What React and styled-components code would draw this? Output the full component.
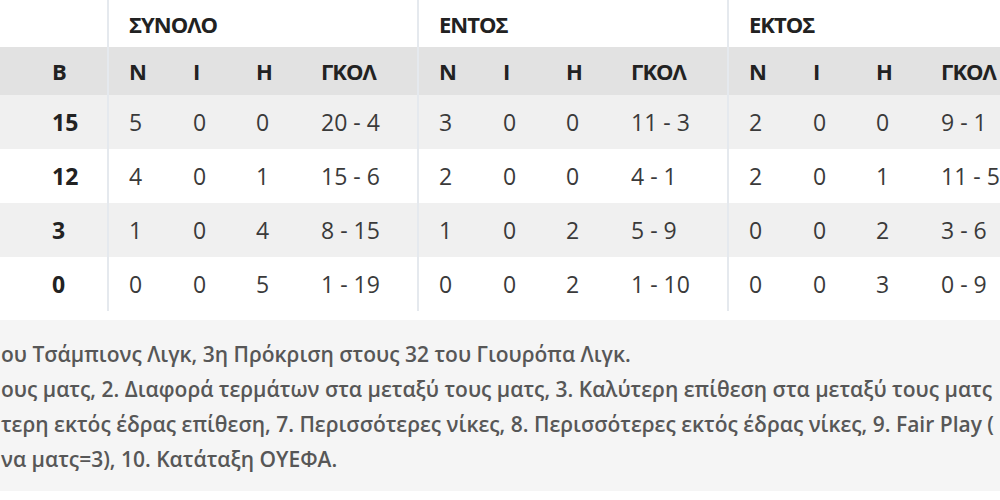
import React from 'react';
import styled, { createGlobalStyle } from 'styled-components';

const GlobalStyle = createGlobalStyle`
  html, body {
    margin: 0;
    padding: 0;
    background: #ffffff;
    overflow: hidden;
  }
  body {
    font-family: "Open Sans", "Noto Sans", sans-serif;
    color: #333333;
  }
`;

const Page = styled.div`
  width: 1000px;
  height: 500px;
  overflow: hidden;
`;

const Table = styled.table`
  border-collapse: collapse;
  table-layout: fixed;
  width: 1038px;
`;

const Cell = styled.td`
  padding: 0 0 0 ${props => (props.$first ? '52px' : '20px')};
  text-align: left;
  vertical-align: middle;
  white-space: nowrap;
  font-size: 23px;
  font-weight: ${props => (props.$bold ? 700 : 400)};
  color: ${props => (props.$bold ? '#222222' : '#3a3a3a')};
  border-left: ${props => (props.$divider ? '2px solid #e5e9ee' : 'none')};
`;

const HeadCell = styled(Cell).attrs({ as: 'th' })`
  font-size: 22px;
  font-weight: 700;
  letter-spacing: -1px;
  color: #222222;
`;

const GroupRow = styled.tr`
  height: 47px;
  background: #ffffff;
`;

const LabelRow = styled.tr`
  height: 48px;
  background: #e2e2e2;
`;

const DataRow = styled.tr`
  height: 54px;
  background: ${props => (props.$shaded ? '#f0f0f0' : '#ffffff')};
`;

const Notes = styled.div`
  margin-top: 9px;
  background: #f5f5f5;
  padding: 17px 0 14px 1px;
  width: 1100px;
`;

const NoteLine = styled.div`
  font-size: 21px;
  font-weight: 600;
  line-height: 35px;
  color: #575757;
  white-space: nowrap;
`;

const groups = ['ΣΥΝΟΛΟ', 'ΕΝΤΟΣ', 'ΕΚΤΟΣ'];
const labels = ['Ν', 'Ι', 'Η', 'ΓΚΟΛ'];
const colWidths = [65, 63, 65, 117];

const rows = [
  { pts: 15, stats: [[5, 0, 0, '20 - 4'], [3, 0, 0, '11 - 3'], [2, 0, 0, '9 - 1']] },
  { pts: 12, stats: [[4, 0, 1, '15 - 6'], [2, 0, 0, '4 - 1'], [2, 0, 1, '11 - 5']] },
  { pts: 3, stats: [[1, 0, 4, '8 - 15'], [1, 0, 2, '5 - 9'], [0, 0, 2, '3 - 6']] },
  { pts: 0, stats: [[0, 0, 5, '1 - 19'], [0, 0, 2, '1 - 10'], [0, 0, 3, '0 - 9']] },
];

const notes = [
  'ου Τσάμπιονς Λιγκ, 3η Πρόκριση στους 32 του Γιουρόπα Λιγκ.',
  'ους ματς, 2. Διαφορά τερμάτων στα μεταξύ τους ματς, 3. Καλύτερη επίθεση στα μεταξύ τους ματς',
  'τερη εκτός έδρας επίθεση, 7. Περισσότερες νίκες, 8. Περισσότερες εκτός έδρας νίκες, 9. Fair Play (',
  'να ματς=3), 10. Κατάταξη ΟΥΕΦΑ.',
];

const App = () => {
  return (
    <Page>
      <GlobalStyle />
      <Table>
        <colgroup>
          <col style={{ width: 108 }} />
          {groups.map(g =>
            colWidths.map((w, i) => <col key={g + i} style={{ width: w }} />)
          )}
        </colgroup>
        <thead>
          <GroupRow>
            <HeadCell $first />
            {groups.map(g => (
              <HeadCell key={g} colSpan={4} $divider>{g}</HeadCell>
            ))}
          </GroupRow>
          <LabelRow>
            <HeadCell $first>Β</HeadCell>
            {groups.map(g =>
              labels.map((l, i) => (
                <HeadCell key={g + l} $divider={i === 0}>{l}</HeadCell>
              ))
            )}
          </LabelRow>
        </thead>
        <tbody>
          {rows.map((row, r) => (
            <DataRow key={r} $shaded={r % 2 === 0}>
              <Cell $first $bold>{row.pts}</Cell>
              {row.stats.map((group, g) =>
                group.map((value, i) => (
                  <Cell key={g + '-' + i} $divider={i === 0}>{value}</Cell>
                ))
              )}
            </DataRow>
          ))}
        </tbody>
      </Table>
      <Notes>
        {notes.map(line => (
          <NoteLine key={line}>{line}</NoteLine>
        ))}
      </Notes>
    </Page>
  );
};

export default App;
